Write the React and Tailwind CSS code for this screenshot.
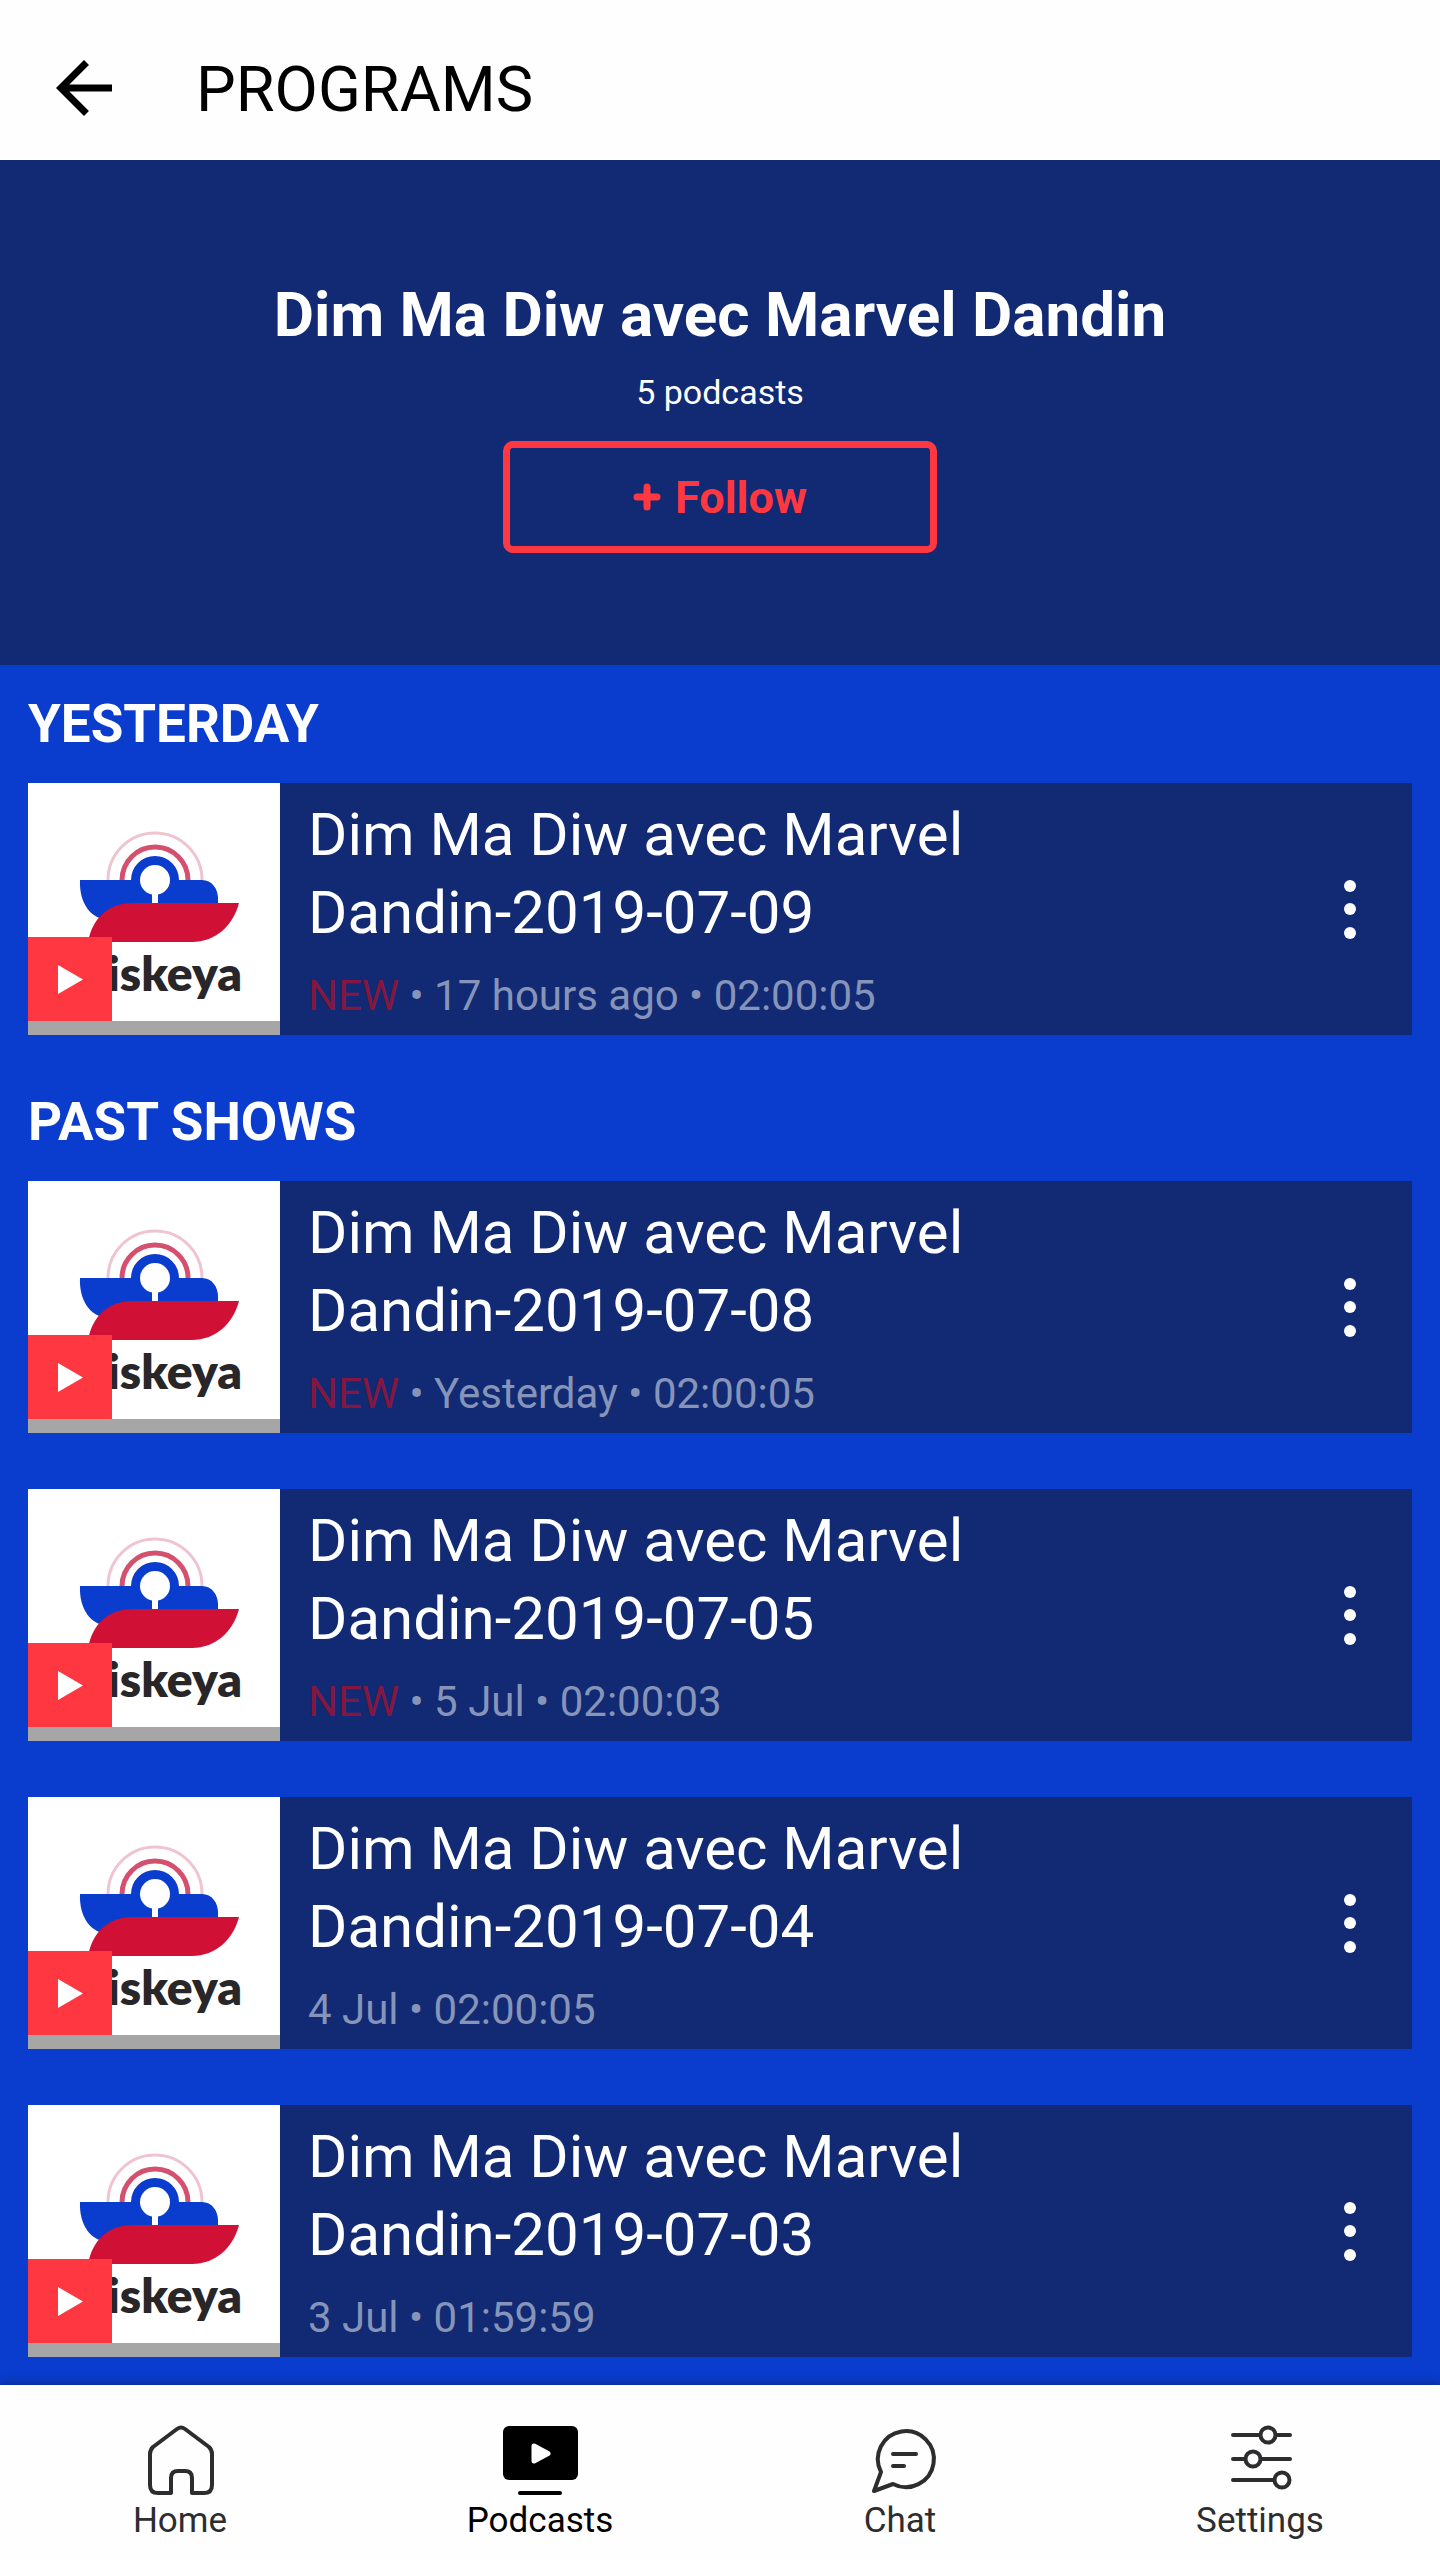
import React, { useState } from 'react'

const yesterday = [
  { date: '2019-07-09', isNew: true, published: '17 hours ago', duration: '02:00:05' },
]

const pastShows = [
  { date: '2019-07-08', isNew: true, published: 'Yesterday', duration: '02:00:05' },
  { date: '2019-07-05', isNew: true, published: '5 Jul', duration: '02:00:03' },
  { date: '2019-07-04', isNew: false, published: '4 Jul', duration: '02:00:05' },
  { date: '2019-07-03', isNew: false, published: '3 Jul', duration: '01:59:59' },
]

function StationLogo() {
  return (
    <svg viewBox="0 0 252 252" className="w-full h-full" role="img" aria-label="Station logo">
      <path d="M80 97a47 47 0 0 1 94 0" fill="none" stroke="#f0c3d0" strokeWidth="3" />
      <path d="M94 97a33 33 0 0 1 66 0" fill="none" stroke="#d4506e" strokeWidth="5" />
      <path
        d="M52 97H103A24 24 0 0 1 151 97H174C184 97 190 106 190 115V121L120 137H82C63 137 51 120 52 97Z"
        fill="#0a3cce"
      />
      <circle cx="127" cy="97" r="15" fill="#fff" />
      <path d="M124 108h6v13h-6z" fill="#fff" />
      <path d="M60 159C64 136 80 120 104 120H211C205 143 187 159 164 159Z" fill="#d01035" />
      <text
        x="214"
        y="208"
        textAnchor="end"
        fill="#282628"
        className="font-['Lato',sans-serif] text-[48px] font-extrabold"
      >
        iskeya
      </text>
    </svg>
  )
}

function Episode({ episode }) {
  return (
    <li className="flex bg-[#112a73]">
      <div className="relative w-63 h-63 shrink-0 bg-white">
        <StationLogo />
        <button
          type="button"
          aria-label="Play"
          className="absolute left-0 bottom-3.5 w-21 h-21 bg-[#ff3740]"
        >
          <svg viewBox="0 0 84 84" className="w-full h-full" fill="#fff">
            <path d="M30 28v29l25-14.5z" />
          </svg>
        </button>
        <div className="absolute inset-x-0 bottom-0 h-3.5 bg-[#a6a6a6]" />
      </div>
      <div className="flex-1 min-w-0 pl-7 pt-[13px]">
        <h3 className="max-w-[760px] text-[60px] leading-[78px] text-white">
          {`Dim Ma Diw avec Marvel Dandin-${episode.date}`}
        </h3>
        <p className="mt-4 text-[42px] leading-[56px] text-[#8794b9]">
          {episode.isNew && <span className="text-[#84173f]">NEW</span>}
          {`${episode.isNew ? ' • ' : ''}${episode.published} • ${episode.duration}`}
        </p>
      </div>
      <button type="button" aria-label="More options" className="w-31 shrink-0 flex items-center justify-center">
        <svg viewBox="0 0 12 60" className="w-3 h-15" fill="#fff">
          <circle cx="6" cy="7" r="6" />
          <circle cx="6" cy="30" r="6" />
          <circle cx="6" cy="54" r="6" />
        </svg>
      </button>
    </li>
  )
}

function Section({ title, episodes }) {
  return (
    <section className="px-7 pb-7">
      <h2 className="text-[53px] leading-[118px] font-bold text-white">{title}</h2>
      <ul className="flex flex-col gap-14">
        {episodes.map((episode) => (
          <Episode key={episode.date} episode={episode} />
        ))}
      </ul>
    </section>
  )
}

function HomeIcon() {
  return (
    <svg viewBox="0 0 80 72" className="w-20 h-18" fill="none" stroke="currentColor" strokeWidth="4" strokeLinejoin="round">
      <path d="M31 69H18Q10 69 10 61V30Q10 26 13 23L37 5Q41 2 45 5L69 23Q72 26 72 30V61Q72 69 64 69H52V54Q52 47 45 47H38Q31 47 31 54Z" />
    </svg>
  )
}

function PodcastsIcon() {
  return (
    <svg viewBox="0 0 80 72" className="w-20 h-18" fill="currentColor">
      <rect x="3" y="2" width="75" height="54" rx="6" />
      <path d="M34 22v15l14-7.5z" fill="#fff" stroke="#fff" strokeWidth="5" strokeLinejoin="round" />
      <rect x="18" y="67" width="44" height="4" rx="2" />
    </svg>
  )
}

function ChatIcon() {
  return (
    <svg viewBox="0 0 80 72" className="w-20 h-18" fill="none" stroke="currentColor" strokeWidth="4" strokeLinejoin="round" strokeLinecap="round">
      <path d="M21 48A28 28 0 1 1 33 60L14 67Z" />
      <path d="M33 30h23M33 42h11" />
    </svg>
  )
}

function SettingsIcon() {
  return (
    <svg viewBox="0 0 80 72" className="w-20 h-18" fill="none" stroke="currentColor" strokeWidth="4" strokeLinecap="round">
      <path d="M13 11h27M57 11h13M13 35h11M42 35h28M13 56h40" />
      <circle cx="48" cy="11" r="7.5" />
      <circle cx="33" cy="35" r="7.5" />
      <circle cx="62" cy="56" r="7.5" />
    </svg>
  )
}

const tabs = [
  { label: 'Home', Icon: HomeIcon },
  { label: 'Podcasts', Icon: PodcastsIcon },
  { label: 'Chat', Icon: ChatIcon },
  { label: 'Settings', Icon: SettingsIcon },
]

function TabBar({ active }) {
  return (
    <nav className="sticky bottom-0 mt-auto grid grid-cols-4 bg-[#fefefe] pt-[39px] pb-3.5 shadow-[0_0_12px_rgba(0,0,0,0.4)]">
      {tabs.map(({ label, Icon }) => (
        <a
          key={label}
          href={`#${label.toLowerCase()}`}
          aria-current={label === active ? 'page' : undefined}
          className={`flex flex-col items-center ${label === active ? 'text-black' : 'text-[#2d2d30]'}`}
        >
          <Icon />
          <span className="text-[35px] leading-[50px]">{label}</span>
        </a>
      ))}
    </nav>
  )
}

export default function App() {
  const [following, setFollowing] = useState(false)

  return (
    <div className="min-h-screen flex flex-col bg-[#0a3cce] font-['Roboto',sans-serif]">
      <header className="flex items-center h-40 pt-4 pl-[42px] bg-[#fefefe] text-black">
        <button type="button" aria-label="Back">
          <svg viewBox="0 0 24 24" className="w-21 h-21" fill="currentColor">
            <path d="M20 11H7.83l5.59-5.59L12 4l-8 8 8 8 1.41-1.41L7.83 13H20v-2z" />
          </svg>
        </button>
        <h1 className="pl-[70px] pt-1 text-[63px] leading-[80px]">PROGRAMS</h1>
      </header>

      <section className="flex flex-col items-center bg-[#112a73] pt-[115px] pb-28 text-white">
        <h2 className="text-[62px] leading-[80px] font-bold">Dim Ma Diw avec Marvel Dandin</h2>
        <p className="mt-4 text-[34px] leading-[42px]">5 podcasts</p>
        <button
          type="button"
          aria-pressed={following}
          onClick={() => setFollowing(!following)}
          className="mt-7 w-[434px] h-28 flex items-center justify-center gap-3.5 border-7 border-[#ff3740] rounded-[10px] text-[45px] font-bold text-[#ff3740]"
        >
          <svg viewBox="0 0 28 28" className="w-7 h-7" fill="none" stroke="currentColor" strokeWidth="7" strokeLinecap="round">
            <path d="M14 4v20M4 14h20" />
          </svg>
          <span className="pt-0.5">Follow</span>
        </button>
      </section>

      <main>
        <Section title="YESTERDAY" episodes={yesterday} />
        <Section title="PAST SHOWS" episodes={pastShows} />
      </main>

      <TabBar active="Podcasts" />
    </div>
  )
}
